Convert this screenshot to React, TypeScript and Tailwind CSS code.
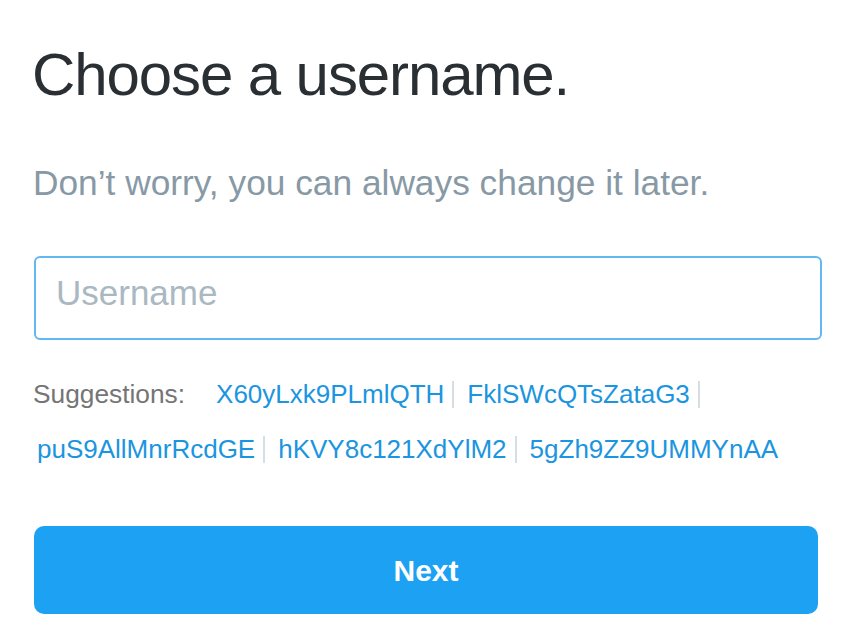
import React from "react";

const suggestions = [
  "X60yLxk9PLmlQTH",
  "FklSWcQTsZataG3",
  "puS9AllMnrRcdGE",
  "hKVY8c121XdYlM2",
  "5gZh9ZZ9UMMYnAA",
];

export default function App() {
  return (
    <div
      className="w-[850px] h-[640px] bg-white px-[34px] pt-[45px] overflow-hidden"
      style={{ fontFamily: '"Liberation Sans", Arial, sans-serif' }}
    >
      <h1 className="-ml-[2px] text-[60px] leading-[60px] tracking-[-1.1px] text-[#292f33] font-normal">
        Choose a username.
      </h1>
      <p className="-ml-[1px] mt-[60px] text-[35.3px] leading-[35px] text-[#8899a6]">
        Don’t worry, you can always change it later.
      </p>
      <input
        type="text"
        placeholder="Username"
        className="mt-[56px] block w-[788px] h-[84px] border-2 border-[#62b8f0] rounded-[6px] pl-[20px] pr-[18px] pb-[10px] text-[35px] text-[#14171a] placeholder:text-[#aab8c2] outline-none"
      />
      <div className="mt-[27px] flex flex-wrap items-center">
        <span className="-ml-[1px] mr-[28px] text-[26.3px] leading-[55px] text-[#757575]">
          Suggestions:
        </span>
        {suggestions.map((s, i) => (
          <span key={s} className="flex items-center">
            <a
              href="#"
              className="ml-[3px] text-[26px] leading-[55px] text-[#1b95e0]"
            >
              {s}
            </a>
            {i < suggestions.length - 1 && (
              <span className="ml-[8px] mr-[10px] w-[2px] h-[27px] bg-[#d6dee4]" />
            )}
          </span>
        ))}
      </div>
      <button className="mt-[49px] w-[784px] h-[88px] rounded-[10px] bg-[#1da1f2] text-white text-[30px] font-bold flex items-center justify-center">
        Next
      </button>
    </div>
  );
}
